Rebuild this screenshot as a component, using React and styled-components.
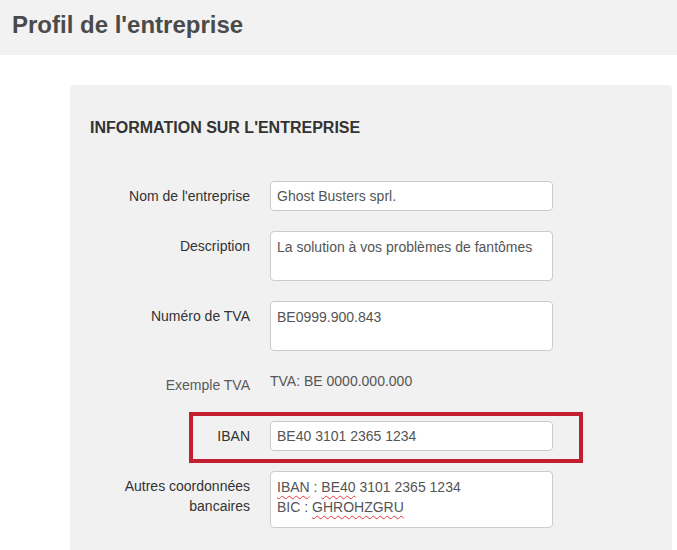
import React from "react";
import styled, { createGlobalStyle } from "styled-components";

const GlobalStyle = createGlobalStyle`
  html, body {
    margin: 0;
    padding: 0;
    background: #fff;
    font-family: "Liberation Sans", Arial, Helvetica, sans-serif;
    font-size: 14px;
    color: #333;
  }
  * { box-sizing: border-box; }
`;

const Page = styled.div`
  width: 677px;
  height: 550px;
  overflow: hidden;
`;

const TopBar = styled.header`
  height: 55px;
  background: #f2f2f2;
  padding: 12px 12px 0;
`;

const Title = styled.h1`
  margin: 0;
  font-size: 24px;
  line-height: 26px;
  font-weight: bold;
  color: #4a4a4a;
`;

const Content = styled.main`
  padding: 30px 5px 0 70px;
`;

const Panel = styled.section`
  background: #f1f1f1;
  border-radius: 4px;
  padding: 20px;
  min-height: 480px;
`;

const SectionTitle = styled.h2`
  margin: 14px 0 44px;
  font-size: 16px;
  line-height: 18px;
  font-weight: bold;
  color: #333;
`;

const Form = styled.div`
  display: flex;
  flex-direction: column;
  align-items: flex-start;
  gap: 20px;
`;

const Row = styled.div`
  position: relative;
  display: grid;
  grid-template-columns: 160px 283px;
  column-gap: 20px;
  align-items: start;
  min-height: 30px;

  ${(p) =>
    p.$highlight &&
    `
    &::after {
      content: "";
      position: absolute;
      top: -9px;
      bottom: -12px;
      left: 99px;
      right: -30px;
      border: 4px solid #c21f30;
      pointer-events: none;
    }
  `}
`;

const Label = styled.label`
  text-align: right;
  line-height: 20px;
  padding-top: ${(p) => (p.$static ? "4px" : "5px")};
  color: ${(p) => (p.$static ? "#5a5a5a" : "#333")};
`;

const Input = styled.input`
  width: 283px;
  height: 30px;
  padding: 5px 6px;
  border: 1px solid #ccc;
  border-radius: 4px;
  background: #fff;
  font: inherit;
  font-size: 14px;
  line-height: 20px;
  color: #555;
  outline: none;
`;

const TextArea = styled.div`
  width: 283px;
  height: ${(p) => p.$h || 50}px;
  padding: 5px 6px;
  border: 1px solid #ccc;
  border-radius: 4px;
  background: #fff;
  line-height: 20px;
  color: #555;
  overflow: hidden;
`;

const StaticValue = styled.div`
  line-height: 20px;
  color: #555;
`;

const Typo = styled.span`
  text-decoration: underline wavy #e8343a;
  text-decoration-thickness: 1px;
  text-underline-offset: 3px;
  text-decoration-skip-ink: none;
`;

export default function App() {
  return (
    <Page>
      <GlobalStyle />
      <TopBar>
        <Title>Profil de l'entreprise</Title>
      </TopBar>
      <Content>
        <Panel>
          <SectionTitle>INFORMATION SUR L'ENTREPRISE</SectionTitle>
          <Form>
            <Row>
              <Label>Nom de l'entreprise</Label>
              <Input readOnly value="Ghost Busters sprl." />
            </Row>
            <Row>
              <Label>Description</Label>
              <TextArea>La solution à vos problèmes de fantômes</TextArea>
            </Row>
            <Row>
              <Label>Numéro de TVA</Label>
              <TextArea>BE0999.900.843</TextArea>
            </Row>
            <Row>
              <Label $static>Exemple TVA</Label>
              <StaticValue>TVA: BE 0000.000.000</StaticValue>
            </Row>
            <Row $highlight>
              <Label>IBAN</Label>
              <Input readOnly value="BE40 3101 2365 1234" />
            </Row>
            <Row>
              <Label>
                Autres coordonnées
                <br />
                bancaires
              </Label>
              <TextArea $h={57}>
                <Typo>IBAN</Typo> : <Typo>BE40</Typo> 3101 2365 1234
                <br />
                BIC : <Typo>GHROHZGRU</Typo>
              </TextArea>
            </Row>
          </Form>
        </Panel>
      </Content>
    </Page>
  );
}
